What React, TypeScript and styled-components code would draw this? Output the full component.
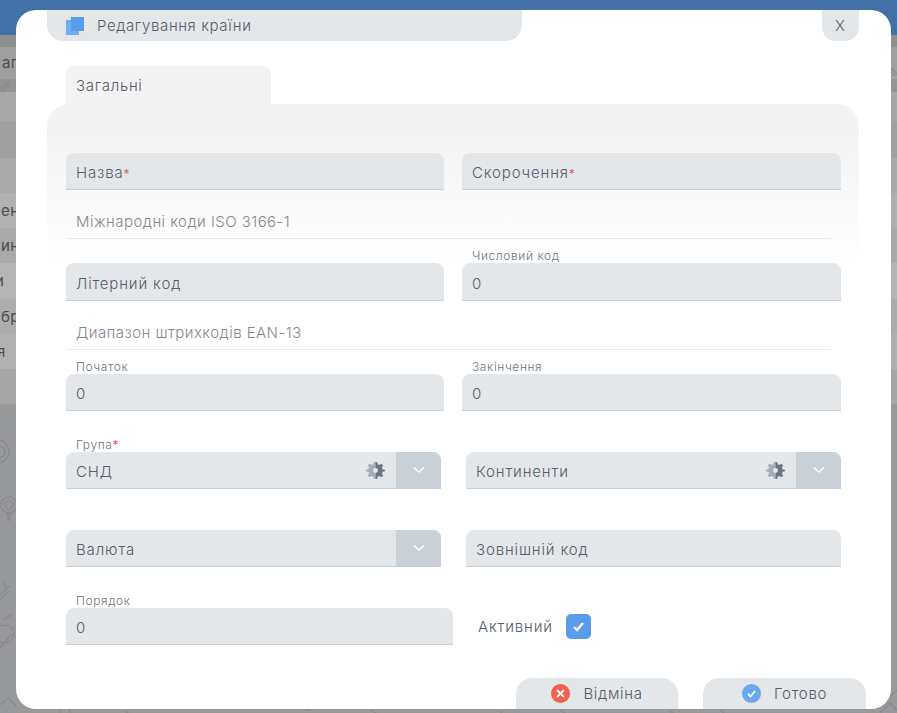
import React from 'react';
import styled, { createGlobalStyle } from 'styled-components';

const Global = createGlobalStyle`
  html, body { margin: 0; padding: 0; width: 897px; height: 713px; overflow: hidden; background: #9a9b9d; }
  * { box-sizing: border-box; }
  body { font-family: "Inter", "Noto Sans", sans-serif; font-weight: 300; color: #565c68; letter-spacing: 0.85px; }
`;

const Page = styled.div`
  position: relative;
  width: 897px;
  height: 713px;
  overflow: hidden;
  background: #98999b;
`;
const TopBar = styled.div`
  height: 35px;
  background: #4470a8;
`;
const BackRow = styled.div<{ $h: number; $bg: string; $shift?: number }>`
  height: ${p => p.$h}px;
  background: ${p => p.$bg};
  font-size: 15px;
  font-weight: 400;
  letter-spacing: 0.45px;
  line-height: ${p => p.$h}px;
  color: #4c4c4e;
  white-space: nowrap;
  text-indent: ${p => p.$shift ?? 1}px;
`;
const Pattern = styled.svg`
  position: absolute;
  left: 0;
  top: 0;
  width: 897px;
  height: 713px;
  fill: none;
  stroke: #88898c;
  stroke-width: 1.2;
`;
const Dialog = styled.div`
  position: absolute;
  left: 16px;
  top: 10px;
  width: 875px;
  height: 699px;
  background: #fff;
  border-radius: 20px;
  overflow: hidden;
  padding: 0 32px 0 31px;
`;
const HeaderRow = styled.div`
  display: flex;
  justify-content: space-between;
  align-items: flex-start;
  height: 56px;
`;
const Title = styled.div`
  width: 475px;
  height: 31px;
  background: #e4e7ea;
  border-radius: 0 0 16px 16px;
  display: flex;
  align-items: center;
  padding-left: 19px;
  gap: 13px;
  font-size: 15px;
  letter-spacing: 0.6px;
`;
const Close = styled.div`
  width: 37px;
  height: 31px;
  background: #e4e7ea;
  border-radius: 0 0 14px 14px;
  display: flex;
  align-items: center;
  justify-content: center;
  font-size: 15px;
`;
const Tab = styled.div`
  margin-left: 19px;
  width: 205px;
  height: 38px;
  background: #f3f3f3;
  border-radius: 8px 8px 0 0;
  padding: 10px 10px 0;
  font-size: 15px;
  letter-spacing: 0.7px;
`;
const Panel = styled.div`
  height: 165px;
  margin-bottom: -165px;
  border-radius: 22px 22px 0 0;
  background: linear-gradient(#f3f3f3 15%, #fff 100%);
`;
const Form = styled.div`
  position: relative;
  padding: 49px 18px 0 19px;
`;
const Grid = styled.div`
  display: grid;
  grid-template-columns: 378px 379px;
  column-gap: 18px;
`;
const SelectGrid = styled(Grid)`
  grid-template-columns: 375px 375px;
  column-gap: 25px;
`;
const LastGrid = styled(Grid)`
  grid-template-columns: 387px 370px;
  column-gap: 0;
`;
const Field = styled.div<{ $tall?: boolean }>`
  position: relative;
  height: ${p => (p.$tall ? 38 : 37)}px;
  background: #e4e7ea;
  border-bottom: 1px solid #c9d0d9;
  border-radius: 8px 8px 0 0;
  display: flex;
  align-items: center;
  padding: 3px 0 0 10px;
  font-size: 15px;
`;
const FloatLabel = styled.span`
  position: absolute;
  left: 10px;
  top: -15px;
  font-size: 12px;
  line-height: 16px;
  letter-spacing: 0.6px;
  color: #6f7580;
`;
const Star = styled.span`
  color: #e5566b;
  font-size: 12px;
  font-weight: 400;
`;
const Section = styled.div`
  margin-right: 10px;
  height: 49px;
  border-bottom: 1px solid #e8eaec;
  padding: 21px 0 0 10px;
  font-size: 15px;
  line-height: 22px;
  letter-spacing: 0.45px;
  color: #83888f;
`;
const Row = styled.div<{ $mt: number }>`
  margin-top: ${p => p.$mt}px;
`;
const SelectButton = styled.div`
  position: absolute;
  right: 0;
  top: 0;
  width: 45px;
  height: 36px;
  background: #c9d0d8;
  border-radius: 0 8px 0 0;
  display: flex;
  align-items: center;
  justify-content: center;
`;
const Gear = styled.svg`
  position: absolute;
  top: 9px;
  right: 56px;
  width: 19px;
  height: 19px;
`;
const Active = styled.div`
  display: flex;
  align-items: center;
  gap: 13px;
  height: 37px;
  margin-left: 25px;
  font-size: 15px;
`;
const Check = styled.div`
  width: 25px;
  height: 25px;
  border-radius: 5px;
  background: #5b9bec;
  display: flex;
  align-items: center;
  justify-content: center;
`;
const Footer = styled.div`
  position: absolute;
  right: 25px;
  bottom: 0;
  display: flex;
  gap: 25px;
`;
const FooterButton = styled.div<{ $w: number }>`
  width: ${p => p.$w}px;
  height: 31px;
  background: #e4e7ea;
  border-radius: 16px 16px 0 0;
  display: flex;
  align-items: center;
  justify-content: center;
  gap: 13px;
  font-size: 15px;
  letter-spacing: 0.7px;
`;

const GearIcon = () => (
  <Gear viewBox="0 0 20 20">
    <path
      fill="#a5adb9"
      d="M8.2 1H10v6.4a2.6 2.6 0 0 0 0 5.2V19H8.2l-.5-2.5-1.7-.7-2.1 1.4-2-2 1.4-2.1-.7-1.7L0 10.9V9.1l2.6-.5.7-1.7-1.4-2.1 2-2L6 4.2l1.7-.7z"
    />
    <path
      fill="#6e7686"
      d="M10 1h1.8l.5 2.5 1.7.7 2.1-1.4 2 2-1.4 2.1.7 1.7 2.6.5v1.8l-2.6.5-.7 1.7 1.4 2.1-2 2-2.1-1.4-1.7.7-.5 2.5H10v-6.4a2.6 2.6 0 0 0 0-5.2z"
    />
  </Gear>
);
const Chevron = () => (
  <svg width="14" height="8" viewBox="0 0 14 8" fill="none" stroke="#fff" strokeWidth="1.6">
    <path d="M2 1.5l5 4.5 5-4.5" />
  </svg>
);

export default function App() {
  return (
    <Page>
      <Global />
      <TopBar />
      <BackRow $h={12} $bg="#8f8f90" />
      <BackRow $h={32} $bg="#9f9fa0" $shift={2}>ап</BackRow>
      <BackRow $h={13} $bg="#949495" />
      <BackRow $h={29} $bg="#a7a7a8" />
      <BackRow $h={37} $bg="#a0a0a1" />
      <BackRow $h={35} $bg="#a9a9aa" />
      <BackRow $h={35} $bg="#b0b0b1">ен</BackRow>
      <BackRow $h={35} $bg="#a9a9aa">ин</BackRow>
      <BackRow $h={36} $bg="#b4b4b5" $shift={-5}>и</BackRow>
      <BackRow $h={35} $bg="#acacad">бр</BackRow>
      <BackRow $h={35} $bg="#b0b0b1" $shift={-3}>я</BackRow>
      <BackRow $h={35} $bg="#a6a6a7" />
      <Pattern viewBox="0 0 897 713">
        <path d="M0 90l8-8M2 92l8-8M889 66l8 8M889 70l6 6" />
        <path d="M0 440c6 2 9 7 9 12s-4 9-9 11" />
        <path d="M0 446c3 1 5 3 5 6s-2 5-5 6" />
        <circle cx="9" cy="505" r="8" />
        <circle cx="9" cy="505" r="4" />
        <path d="M8 513v8M10 513v8" />
        <path d="M0 596l10-11M0 600l9-9M3 580l3 8" />
        <circle cx="5" cy="634" r="9" />
        <path d="M0 648l12-14M4 620l8-6" />
        <path d="M0 705l8-7 8 8" />
        <circle cx="65" cy="712" r="5" />
        <path d="M125 711l8 5M305 711l8-3M370 710l8 4M500 711l6 6M560 710l8 5M670 711l6 4M720 710l8 6" />
        <path d="M880 713l10-10 7 7M889 698l8-8" />
      </Pattern>
      <Dialog>
        <HeaderRow>
          <Title>
            <svg width="18" height="18" viewBox="0 0 18 18">
              <rect x="0" y="3" width="13" height="15" fill="#6fadf6" />
              <rect x="5" y="0" width="13" height="14" fill="#5a9bee" />
            </svg>
            Редагування країни
          </Title>
          <Close>X</Close>
        </HeaderRow>
        <Tab>Загальні</Tab>
        <Panel />
        <Form>
          <Grid>
            <Field><span>Назва<Star>*</Star></span></Field>
            <Field><span>Скорочення<Star>*</Star></span></Field>
          </Grid>
          <Section>Міжнародні коди ISO 3166-1</Section>
          <Row $mt={24}>
            <Grid>
              <Field $tall>Літерний код</Field>
              <Field $tall><FloatLabel>Числовий код</FloatLabel>0</Field>
            </Grid>
          </Row>
          <Section>Диапазон штрихкодів EAN-13</Section>
          <Row $mt={24}>
            <Grid>
              <Field><FloatLabel>Початок</FloatLabel>0</Field>
              <Field><FloatLabel>Закінчення</FloatLabel>0</Field>
            </Grid>
          </Row>
          <Row $mt={41}>
            <SelectGrid>
              <Field>
                <FloatLabel>Група<Star>*</Star></FloatLabel>
                СНД
                <GearIcon />
                <SelectButton><Chevron /></SelectButton>
              </Field>
              <Field>
                Континенти
                <GearIcon />
                <SelectButton><Chevron /></SelectButton>
              </Field>
            </SelectGrid>
          </Row>
          <Row $mt={41}>
            <SelectGrid>
              <Field>Валюта<SelectButton><Chevron /></SelectButton></Field>
              <Field>Зовнішній код</Field>
            </SelectGrid>
          </Row>
          <Row $mt={41}>
            <LastGrid>
              <Field><FloatLabel>Порядок</FloatLabel>0</Field>
              <Active>
                Активний
                <Check>
                  <svg width="13" height="11" viewBox="0 0 13 11" fill="none" stroke="#fff" strokeWidth="2.4">
                    <path d="M2 6l3 3 6-7" />
                  </svg>
                </Check>
              </Active>
            </LastGrid>
          </Row>
        </Form>
        <Footer>
          <FooterButton $w={162}>
            <svg width="19" height="19" viewBox="0 0 19 19">
              <circle cx="9.5" cy="9.5" r="9.5" fill="#f0604a" />
              <path d="M6 6l7 7M13 6l-7 7" stroke="#fff" strokeWidth="1.8" />
            </svg>
            Відміна
          </FooterButton>
          <FooterButton $w={163}>
            <svg width="19" height="19" viewBox="0 0 19 19">
              <circle cx="9.5" cy="9.5" r="9.5" fill="#6aa8f4" />
              <path d="M6 10l2.5 2.5L13 7" stroke="#fff" strokeWidth="1.8" fill="none" />
            </svg>
            Готово
          </FooterButton>
        </Footer>
      </Dialog>
    </Page>
  );
}
